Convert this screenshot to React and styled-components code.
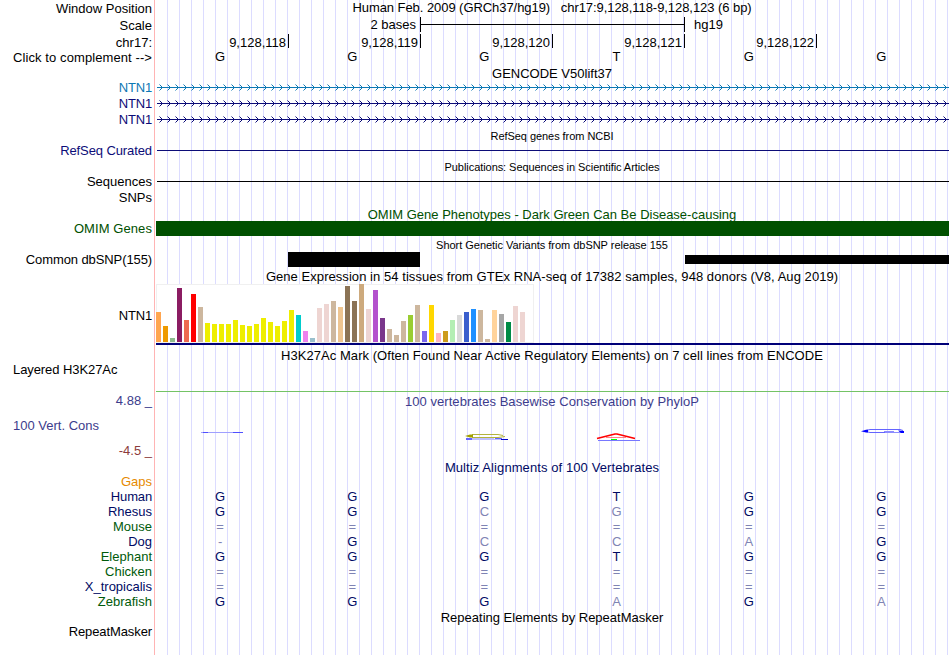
import React from "react";
import styled, { createGlobalStyle } from "styled-components";

const navy = "#0c0c78";
const species = "#000a64";
const speciesAlt = "#005a0a";

// height is the distance from the previous label down to this one
const labels = [
  { text: "Window Position", height: 16 },
  { text: "Scale", height: 17 },
  { text: "chr17:", height: 17 },
  { text: "Click to complement -->", height: 15, spacing: 0.09 },
  { text: "NTN1", height: 30, color: "#0c78b4", spacing: -0.2 },
  { text: "NTN1", height: 16, color: navy, spacing: -0.2 },
  { text: "NTN1", height: 16, color: navy, spacing: -0.2 },
  { text: "RefSeq Curated", height: 31, color: navy, spacing: -0.1 },
  { text: "Sequences", height: 31 },
  { text: "SNPs", height: 16 },
  { text: "OMIM Genes", height: 31, color: "#005000", spacing: 0.08 },
  { text: "Common dbSNP(155)", height: 31, spacing: -0.1 },
  { text: "NTN1", height: 56, spacing: -0.2 },
  { text: "Layered H3K27Ac", height: 54, left: true, spacing: -0.08 },
  { text: "4.88 _", height: 31, color: "#3c3c8c" },
  { text: "100 Vert. Cons", height: 25, color: "#3c3c8c", left: true },
  { text: "-4.5 _", height: 25, color: "#8c3c3c" },
  { text: "Gaps", height: 31, color: "#e68a00" },
  { text: "Human", height: 15, color: species, spacing: -0.15 },
  { text: "Rhesus", height: 15, color: species },
  { text: "Mouse", height: 15, color: speciesAlt },
  { text: "Dog", height: 15, color: species },
  { text: "Elephant", height: 15, color: speciesAlt },
  { text: "Chicken", height: 15, color: speciesAlt },
  { text: "X_tropicalis", height: 15, color: species },
  { text: "Zebrafish", height: 15, color: speciesAlt },
  { text: "RepeatMasker", height: 30, spacing: -0.1 }
];

const positions = ["9,128,118", "9,128,119", "9,128,120", "9,128,121", "9,128,122"];

const strands = ["#0c78b4", navy, navy];

const tissues = [
  [30, "#ffa54f"], [16, "#ee9a00"], [4, "#8fbc8f"], [54, "#8b1c62"], [22, "#ee6a50"],
  [48, "#ff0000"], [35, "#cdb79e"], [19, "#eeee00"], [18, "#eeee00"], [18, "#eeee00"],
  [18, "#eeee00"], [22, "#eeee00"], [17, "#eeee00"], [16, "#eeee00"], [18, "#eeee00"],
  [24, "#eeee00"], [20, "#eeee00"], [16, "#eeee00"], [21, "#eeee00"], [32, "#eeee00"],
  [27, "#00cdcd"], [11, "#ee82ee"], [4, "#9ac0cd"], [34, "#eed5d2"], [38, "#eed5d2"],
  [41, "#cdb79e"], [35, "#eec591"], [56, "#8b7355"], [41, "#8b7355"], [58, "#cdaa7d"],
  [33, "#eed5d2"], [52, "#b452cd"], [24, "#7a378b"], [13, "#cdb79e"], [7, "#cdb79e"],
  [21, "#cdb79e"], [27, "#9acd32"], [37, "#cdb79e"], [11, "#7a67ee"], [37, "#ffd700"],
  [9, "#ffb6c1"], [11, "#cd9b1d"], [22, "#b4eeb4"], [27, "#d9d9d9"], [30, "#3a5fcd"],
  [33, "#1e90ff"], [32, "#cdb79e"], [3, "#cdb79e"], [32, "#ffd39b"], [28, "#a6a6a6"],
  [20, "#008b45"], [36, "#eed5d2"], [30, "#eed5d2"], [0, "#ff00ff"]
];

// lower case marks a base that differs from human
const alignments = [
  "GGGTGG",
  "GGcgGG",
  "======",
  "-GccaG",
  "GGGTGG",
  "======",
  "======",
  "GGGaGa"
];

function Strand({ color, id }) {
  return (
    <StrandSvg width="793" height="7" shapeRendering="crispEdges">
      <defs>
        <pattern id={id} x="3" width="8" height="7" patternUnits="userSpaceOnUse">
          <path d="M1 1h1v1h-1zM2 2h1v1h-1zM2 4h1v1h-1zM1 5h1v1h-1z" fill={color} />
          <path d="M0 0h1v1h-1zM0 6h1v1h-1z" fill={color} opacity="0.5" />
        </pattern>
      </defs>
      <rect x="3" width="790" height="7" fill={`url(#${id})`} />
      <rect x="1" y="3" width="792" height="1" fill={color} />
    </StrandSvg>
  );
}

function Conservation() {
  return (
    <ConservationSvg width="793" height="51" fill="none">
      <g transform="translate(-156 -409)">
        <path d="M201 432.5h42" stroke="#a0a0ff" />
        <path d="M203 432.5h5M233 432.5h10" stroke="#5050ff" />
        <path d="M472 434.5h26l5 1M472 437.5h26l7 -1" stroke="#b4b43c" />
        <path d="M465 436l5 -1.5h3v3h-3z" fill="#a0a000" />
        <path d="M466 438.5h6M466 439.5h6M495 438.5h7" stroke="#6464ff" />
        <path d="M472 439.5h30M472 438.5h22" stroke="#c0c0ff" />
        <path d="M501 439.5h7" stroke="#0000c8" />
        <path d="M597 438.5l13 -3.3l5 -1.2h2l5 1.2l13 3.3" stroke="#ff0000" strokeWidth="1.6" />
        <path d="M606 437.5h20" stroke="#ff5050" strokeWidth="0.7" />
        <path d="M598 440.5h42" stroke="#7878ff" />
        <path d="M611 439.5h6" stroke="#00ff00" />
        <path d="M866 430.5l4 -1h30l3 1M866 431.5l4 1h15" stroke="#6464ff" />
        <path d="M885 432.5h16M884 431.5h10" stroke="#8c8cff" />
        <path d="M861 431.2l5 -1.4h2v2.8h-2zM898 430.5l6 .5v2h-3z" fill="#0000ff" />
      </g>
    </ConservationSvg>
  );
}

function App() {
  return (
    <Browser>
      <GlobalStyle />
      <Labels>
        {labels.map(({ text, height, color, left, spacing }, i) => (
          <Label key={i} $height={height} $color={color} $left={left} $spacing={spacing}>{text}</Label>
        ))}
      </Labels>
      <Tracks>
        <Heading $height={15} $spacing={-0.06}>Human Feb. 2009 (GRCh37/hg19) &nbsp; chr17:9,128,118-9,128,123 (6 bp)</Heading>
        <Scale>
          <span className="amount">2 bases</span>
          <div className="bar"></div>
          <span>hg19</span>
        </Scale>
        <Ruler>
          {positions.map((position) => <Tick key={position}>{position}</Tick>)}
        </Ruler>
        <Bases>
          {"GGGTGG".split("").map((base, i) => <Base key={i} $color="#000">{base}</Base>)}
        </Bases>
        <Heading $height={17}>GENCODE V50lift37</Heading>
        <Strands>
          {strands.map((color, i) => <Strand key={i} id={`strand${i}`} color={color} />)}
        </Strands>
        <Heading $height={20} $small $spacing={-0.05}>RefSeq genes from NCBI</Heading>
        <Line $top={7} $inset={1} $color={navy} />
        <Heading $height={23} $small $spacing={-0.06}>Publications: Sequences in Scientific Articles</Heading>
        <Line $top={7} $inset={1} $color="#000" />
        <Heading $height={40} $color="#005000">OMIM Gene Phenotypes - Dark Green Can Be Disease-causing</Heading>
        <OmimBar />
        <Heading $height={16} $small $spacing={-0.03}>Short Genetic Variants from dbSNP release 155</Heading>
        <Variants>
          <Variant $left={132} $width={132} $height={15} />
          <Variant $left={265} $width={264} $height={9} />
        </Variants>
        <Heading $height={17} $spacing={0.055}>Gene Expression in 54 tissues from GTEx RNA-seq of 17382 samples, 948 donors (V8, Aug 2019)</Heading>
        <Expression>
          {tissues.map(([height, color], i) => <Tissue key={i} style={{ height }} $color={color} />)}
        </Expression>
        <GeneModel />
        <Heading $height={18} $spacing={0.05}>H3K27Ac Mark (Often Found Near Active Regulatory Elements) on 7 cell lines from ENCODE</Heading>
        <Line $top={28} $inset={0} $color="#74c365" />
        <Heading $height={17} $color="#3c3c8c" $spacing={0.04}>100 vertebrates Basewise Conservation by PhyloP</Heading>
        <Conservation />
        <Heading $height={15} $color={species} $spacing={0.09}>Multiz Alignments of 100 Vertebrates</Heading>
        <Alignment>
          {alignments.map((row, i) => (
            <Bases key={i}>
              {row.split("").map((base, j) => (
                <Base key={j} $color={/[A-Z]/.test(base) ? species : "#7f84b4"}>{base.toUpperCase()}</Base>
              ))}
            </Bases>
          ))}
        </Alignment>
        <Heading $height={16}>Repeating Elements by RepeatMasker</Heading>
      </Tracks>
    </Browser>
  );
}

const GlobalStyle = createGlobalStyle`
  body {
    margin: 0;
    background-color: #fff;
  }
`;

const Browser = styled.main`
  display: flex;
  width: 950px;
  height: 655px;
  overflow: hidden;
  font: 13px/15px "Liberation Sans", Arial, sans-serif;
  color: #000;
  white-space: nowrap;
`;

const Labels = styled.div`
  width: 154px;
  flex: none;
`;

const Label = styled.div`
  box-sizing: border-box;
  height: ${({ $height }) => $height}px;
  display: flex;
  align-items: flex-end;
  justify-content: ${({ $left }) => ($left ? "flex-start" : "flex-end")};
  padding: 0 2px 0 13px;
  letter-spacing: ${({ $spacing }) => $spacing || 0}px;
  color: ${({ $color }) => $color || "#000"};
`;

const Tracks = styled.div`
  flex: 1;
  min-width: 0;
  border-left: 1px solid #ffb4b4;
  padding: 0 1px;
  background-image:
    linear-gradient(to right, #fff 1px, transparent 1px),
    repeating-linear-gradient(to right, #dcdcff 0 1px, transparent 1px 12px);
`;

const Heading = styled.div`
  height: ${({ $height }) => $height}px;
  display: flex;
  align-items: flex-end;
  justify-content: center;
  padding-right: 1px;
  font-size: ${({ $small }) => ($small ? 11 : 13)}px;
  line-height: ${({ $small }) => ($small ? 13 : 15)}px;
  letter-spacing: ${({ $spacing }) => $spacing || 0}px;
  color: ${({ $color }) => $color || "#000"};
`;

const Scale = styled.div`
  display: flex;
  height: 18px;
  padding-top: 2px;
  box-sizing: border-box;

  .amount {
    width: 260px;
    margin-right: 4px;
    text-align: right;
  }
  .bar {
    width: 263px;
    height: 15px;
    border: solid #000;
    border-width: 0 1px;
    background: linear-gradient(#000, #000) 0 7px / 100% 1px no-repeat;
    margin-right: 9px;
  }
`;

const Ruler = styled.div`
  display: flex;
  height: 16px;
  padding-left: 1px;
`;

const Tick = styled.div`
  box-sizing: border-box;
  width: 132px;
  height: 14px;
  margin-top: 1px;
  padding: 1px 2px 0 0;
  border-right: 1px solid #000;
  text-align: right;
`;

const Bases = styled.div`
  display: grid;
  grid-template-columns: repeat(6, 1fr);
  height: 15px;
`;

const Base = styled.span`
  padding-right: 4px;
  text-align: center;
  color: ${({ $color }) => $color};

  &:last-child {
    padding-right: 3px;
  }
`;

const Strands = styled.div`
  display: flex;
  flex-direction: column;
  gap: 9px;
  padding-top: 3px;
`;

const StrandSvg = styled.svg`
  display: block;
`;

const Line = styled.div`
  height: 1px;
  margin: ${({ $top }) => $top}px 0 0 ${({ $inset }) => $inset}px;
  background-color: ${({ $color }) => $color};
`;

const OmimBar = styled.div`
  height: 15px;
  margin-top: -1px;
  background-color: #005000;
`;

const Variants = styled.div`
  display: flex;
  align-items: center;
  height: 15px;
`;

const Variant = styled.div`
  flex: none;
  width: ${({ $width }) => $width}px;
  height: ${({ $height }) => $height}px;
  margin-left: ${({ $left }) => $left}px;
  background-color: #000;
`;

const Expression = styled.div`
  display: flex;
  align-items: flex-end;
  gap: 2px;
  box-sizing: border-box;
  width: 378px;
  height: 59px;
  padding-bottom: 1px;
  background-color: #fff;
  box-shadow: inset 0 0 0 1px #f0f0f0;
`;

const Tissue = styled.div`
  width: 5px;
  background-color: ${({ $color }) => $color};
`;

const GeneModel = styled.div`
  height: 2px;
  background-color: #000078;
`;

const ConservationSvg = styled.svg`
  display: block;
`;

const Alignment = styled.div`
  padding-top: 14px;
`;

export default App;
